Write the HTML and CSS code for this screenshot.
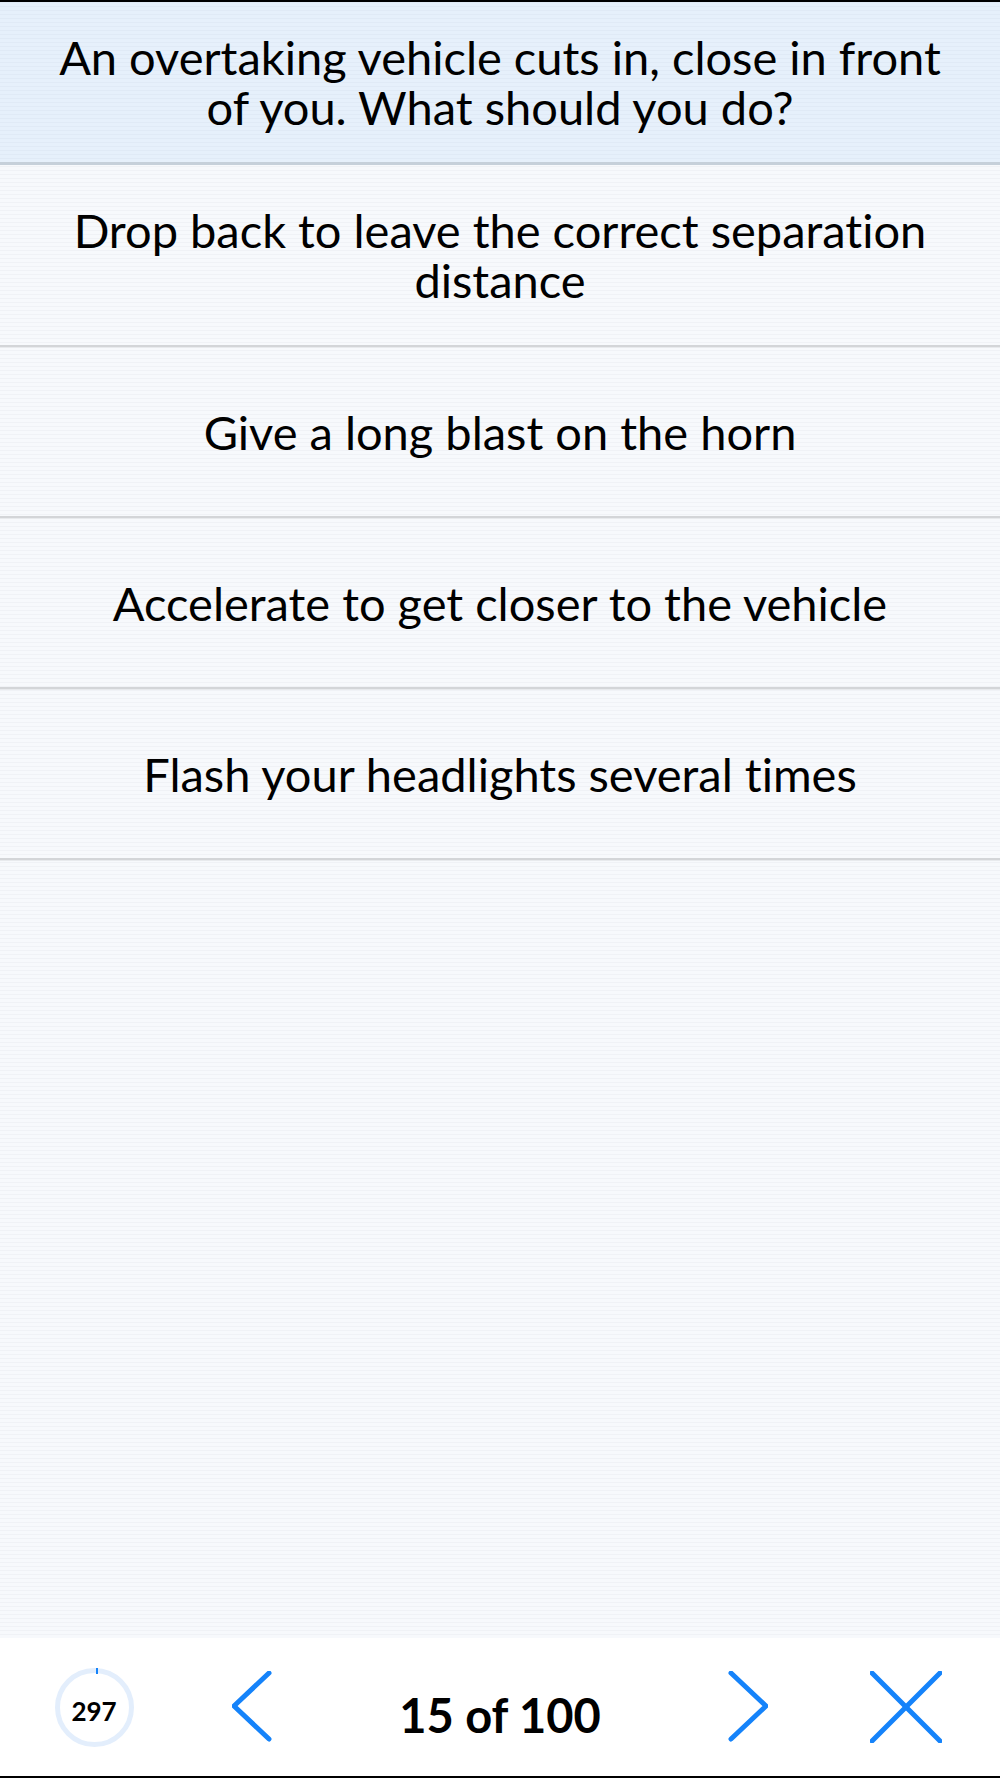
FILE: index.html
```html
<html>
<head>
  <meta charset="utf-8">
  <title>Question 15 of 100</title>
  <meta name="viewport" content="width=device-width, initial-scale=1">
  <link rel="stylesheet" href="styles.css">
</head>
<body>
  <div class="screen">
    <div class="question">An overtaking vehicle cuts in, close in front of you. What should you do?</div>

    <ul class="answers">
      <li>Drop back to leave the correct separation distance</li>
      <li>Give a long blast on the horn</li>
      <li>Accelerate to get closer to the vehicle</li>
      <li>Flash your headlights several times</li>
    </ul>

    <div class="toolbar">
      <div class="cell">
        <div class="timer"><span>297</span></div>
      </div>
      <div class="cell">
        <svg class="chevron" width="40" height="72" viewBox="0 0 40 72">
          <polyline points="37,2 2,35 37,68" />
        </svg>
      </div>
      <div class="cell counter">15 of 100</div>
      <div class="cell">
        <svg class="chevron" width="40" height="72" viewBox="0 0 40 72">
          <polyline points="3,2 38,35 3,68" />
        </svg>
      </div>
      <div class="cell">
        <svg class="close" width="72" height="72" viewBox="0 0 72 72">
          <line x1="2" y1="2" x2="70" y2="70" />
          <line x1="70" y1="2" x2="2" y2="70" />
        </svg>
      </div>
    </div>
  </div>
</body>
</html>
```
FILE: styles.css
```css
* {
  box-sizing: border-box;
}

body {
  margin: 0;
  font-family: 'Lato', sans-serif;
  font-variant-ligatures: none;
  color: #000;
}

.screen {
  height: 1778px;
  display: flex;
  flex-direction: column;
  border-top: 2px solid #000;
  border-bottom: 2px solid #000;
  background-color: #f7f9fc;
  background-image: repeating-linear-gradient(to bottom, #f0f2f6 0, #f0f2f6 1px, transparent 1px, transparent 4px);
}

.question {
  padding: 30px 40px 30px;
  font-size: 47px;
  line-height: 50px;
  text-align: center;
  background-color: #e6f0fb;
  background-image: repeating-linear-gradient(to bottom, #e0eaf6 0, #e0eaf6 1px, transparent 1px, transparent 4px);
  border-bottom: 3px solid #c6d0da;
}

.answers {
  list-style: none;
  margin: 0;
  padding: 0;
  flex: 1;
}

.answers li {
  display: flex;
  align-items: center;
  justify-content: center;
  min-height: 171px;
  padding: 40px 40px;
  font-size: 47px;
  line-height: 50px;
  text-align: center;
  border-bottom: 2px solid #d3d5d8;
  box-shadow: 0 1px 0 #e8eaed;
}

.toolbar {
  height: 138px;
  background: #fff;
  display: grid;
  grid-template-columns: 188px 128px 368px 128px 188px;
  align-items: center;
}

.cell {
  display: flex;
  justify-content: center;
  align-items: center;
}

.timer {
  position: relative;
  width: 79px;
  height: 79px;
  border: 5px solid #e3eefc;
  border-radius: 50%;
  display: flex;
  align-items: center;
  justify-content: center;
  padding-top: 7px;
  font-size: 26px;
  font-weight: bold;
}

.timer:before {
  content: "";
  position: absolute;
  top: -5px;
  left: 36px;
  width: 2px;
  height: 6px;
  background: #1583fa;
}

.counter {
  font-size: 47px;
  font-weight: bold;
  line-height: 50px;
  margin-top: 16px;
}

.chevron polyline {
  fill: none;
  stroke: #1583fa;
  stroke-width: 5;
  stroke-linecap: round;
}

.close line {
  stroke: #1583fa;
  stroke-width: 5;
  stroke-linecap: round;
}
```
